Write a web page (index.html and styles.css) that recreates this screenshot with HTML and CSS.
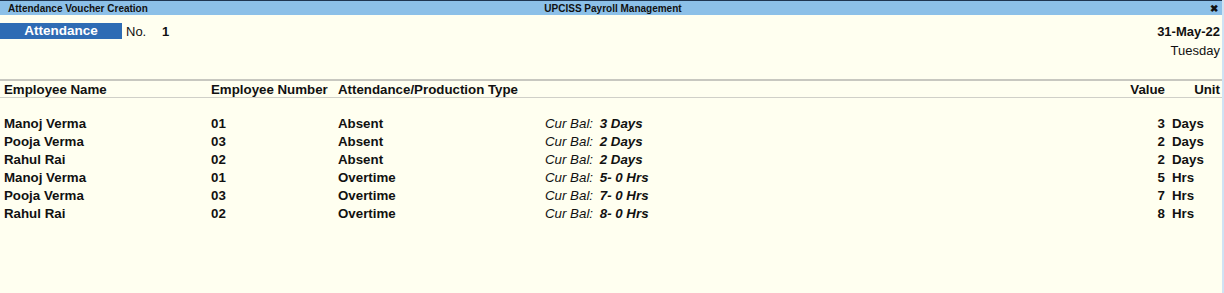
FILE: index.html
```html
<!DOCTYPE html>
<html lang="en">
<head>
    <meta charset="UTF-8">
    <title>Attendance Voucher Creation</title>
    <link rel="stylesheet" href="styles.css">
</head>
<body>
    <div class="window">
        <div class="titlebar">
            <span class="title-left">Attendance Voucher Creation</span>
            <span class="title-mid">UPCISS Payroll Management</span>
            <span class="title-close">&#10006;</span>
        </div>

        <div class="voucher-head">
            <div class="vh-left">
                <span class="vtype">Attendance</span>
                <span class="vno-label">No.</span>
                <span class="vno">1</span>
            </div>
            <div class="vh-right">
                <div class="vdate">31-May-22</div>
                <div class="vday">Tuesday</div>
            </div>
        </div>

        <div class="cols-head">
            <span class="c-name">Employee Name</span>
            <span class="c-num">Employee Number</span>
            <span class="c-type">Attendance/Production Type</span>
            <span class="c-bal"></span>
            <span class="c-val">Value</span>
            <span class="c-unit">Unit</span>
        </div>

        <div class="rows">
            <div class="row">
                <span class="c-name">Manoj Verma</span>
                <span class="c-num">01</span>
                <span class="c-type">Absent</span>
                <span class="c-bal"><i>Cur Bal:</i> <b>3 Days</b></span>
                <span class="c-val">3</span>
                <span class="c-unit">Days</span>
            </div>
            <div class="row">
                <span class="c-name">Pooja Verma</span>
                <span class="c-num">03</span>
                <span class="c-type">Absent</span>
                <span class="c-bal"><i>Cur Bal:</i> <b>2 Days</b></span>
                <span class="c-val">2</span>
                <span class="c-unit">Days</span>
            </div>
            <div class="row">
                <span class="c-name">Rahul Rai</span>
                <span class="c-num">02</span>
                <span class="c-type">Absent</span>
                <span class="c-bal"><i>Cur Bal:</i> <b>2 Days</b></span>
                <span class="c-val">2</span>
                <span class="c-unit">Days</span>
            </div>
            <div class="row">
                <span class="c-name">Manoj Verma</span>
                <span class="c-num">01</span>
                <span class="c-type">Overtime</span>
                <span class="c-bal"><i>Cur Bal:</i> <b>5- 0 Hrs</b></span>
                <span class="c-val">5</span>
                <span class="c-unit">Hrs</span>
            </div>
            <div class="row">
                <span class="c-name">Pooja Verma</span>
                <span class="c-num">03</span>
                <span class="c-type">Overtime</span>
                <span class="c-bal"><i>Cur Bal:</i> <b>7- 0 Hrs</b></span>
                <span class="c-val">7</span>
                <span class="c-unit">Hrs</span>
            </div>
            <div class="row">
                <span class="c-name">Rahul Rai</span>
                <span class="c-num">02</span>
                <span class="c-type">Overtime</span>
                <span class="c-bal"><i>Cur Bal:</i> <b>8- 0 Hrs</b></span>
                <span class="c-val">8</span>
                <span class="c-unit">Hrs</span>
            </div>
        </div>
    </div>
</body>
</html>
```

FILE: styles.css
```css
* {
    margin: 0;
    padding: 0;
    box-sizing: border-box;
}

html, body {
    height: 100%;
}

body {
    background-color: #fffff0;
    font-family: "Liberation Sans", Arial, sans-serif;
    color: #111;
}

.window {
    height: 100%;
    border-right: 2px solid #cfe3f4;
}

.titlebar {
    display: grid;
    grid-template-columns: 1fr auto 1fr;
    align-items: center;
    height: 15px;
    border-top: 1px solid #1f3550;
    background-color: #8cc0e8;
    font-size: 10px;
    font-weight: bold;
    padding: 0 4px 0 8px;
}

.title-mid {
    text-align: center;
}

.title-close {
    justify-self: end;
    font-size: 10px;
    font-weight: 900;
}

.voucher-head {
    display: flex;
    justify-content: space-between;
    height: 66px;
    padding-top: 8px;
    border-bottom: 2px solid #c8c8c0;
}

.vh-left {
    display: flex;
    align-items: center;
    height: 16px;
    font-size: 13px;
}

.vtype {
    display: inline-block;
    width: 122px;
    height: 16px;
    line-height: 16px;
    background-color: #2e6cb4;
    color: #fff;
    font-size: 13.5px;
    font-weight: bold;
    text-align: center;
}

.vno-label {
    margin-left: 4px;
    width: 36px;
}

.vno {
    font-weight: bold;
}

.vh-right {
    text-align: right;
    padding-right: 2px;
    font-size: 13px;
}

.vdate {
    font-weight: bold;
    line-height: 16px;
    margin-top: 1px;
}

.vday {
    line-height: 16px;
    margin-top: 3px;
}

.cols-head,
.row {
    display: grid;
    grid-template-columns: 207px 127px 207px 1fr 40px 50px;
    padding: 0 2px 0 4px;
    font-size: 13.3px;
    font-weight: bold;
    line-height: 18px;
}

.cols-head {
    height: 17px;
    line-height: 17px;
    border-bottom: 1px solid #d0d0c8;
}

.rows {
    padding-top: 17px;
}

.c-val {
    text-align: right;
    padding-right: 5px;
}

.cols-head .c-unit {
    text-align: right;
}

.row .c-unit {
    padding-left: 2px;
}

.c-bal i {
    font-weight: normal;
    margin-right: 3px;
}

.c-bal b {
    font-style: italic;
}
```
